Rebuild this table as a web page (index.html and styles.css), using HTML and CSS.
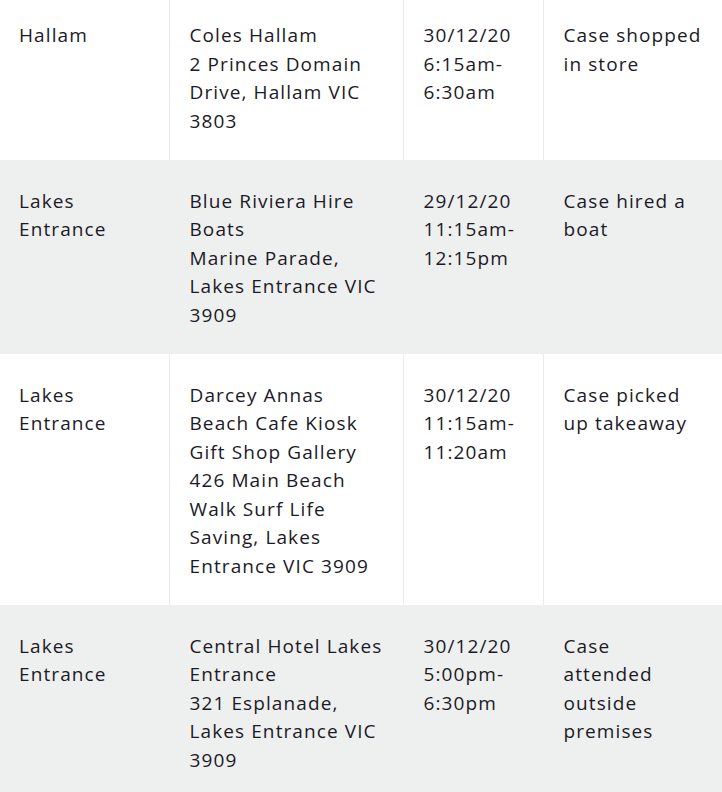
FILE: index.html
```html
<!DOCTYPE html>
<html lang="en">
<head>
<meta charset="utf-8">
<title>Exposure sites</title>
<link rel="stylesheet" href="styles.css">
</head>
<body>
<table class="sites">
  <colgroup>
    <col class="c-suburb">
    <col class="c-site">
    <col class="c-time">
    <col class="c-notes">
  </colgroup>
  <tbody>
    <tr class="row row-first">
      <td>Hallam</td>
      <td>Coles Hallam<br>2 Princes Domain Drive, Hallam VIC 3803</td>
      <td>30/12/20 6:15am-6:30am</td>
      <td>Case shopped in store</td>
    </tr>
    <tr class="row row-alt">
      <td>Lakes Entrance</td>
      <td>Blue Riviera Hire Boats<br>Marine Parade, Lakes Entrance VIC 3909</td>
      <td>29/12/20 11:15am-12:15pm</td>
      <td>Case hired a boat</td>
    </tr>
    <tr class="row">
      <td>Lakes Entrance</td>
      <td>Darcey Annas Beach Cafe Kiosk Gift Shop Gallery<br>426 Main Beach Walk Surf Life Saving, Lakes Entrance VIC 3909</td>
      <td>30/12/20 11:15am-11:20am</td>
      <td>Case picked up takeaway</td>
    </tr>
    <tr class="row row-alt">
      <td>Lakes Entrance</td>
      <td>Central Hotel Lakes Entrance<br>321 Esplanade, Lakes Entrance VIC 3909</td>
      <td>30/12/20 5:00pm-6:30pm</td>
      <td>Case attended outside premises</td>
    </tr>
  </tbody>
</table>
</body>
</html>
```
FILE: styles.css
```css
html, body {
  margin: 0;
  padding: 0;
  background: #ffffff;
}

.sites {
  width: 722px;
  margin-top: -5.5px;
  border-collapse: collapse;
  table-layout: fixed;
  font-family: "Open Sans", "Liberation Sans", sans-serif;
  font-size: 19px;
  line-height: 28.5px;
  letter-spacing: 1.1px;
  color: #1c1a26;
}

.c-suburb { width: 169px; }
.c-site { width: 234px; }
.c-time { width: 140px; }
.c-notes { width: 179px; }

.sites td {
  vertical-align: top;
  padding: 26.5px 16px 25px 20px;
  border-left: 1px solid #ebebeb;
}

.sites td:first-child {
  border-left: none;
  padding-left: 19px;
}

.sites td:last-child {
  padding-right: 19px;
}

.row-alt {
  background: #eef0ef;
}

.row-alt td {
  border-left-color: #eef0ef;
}
```
